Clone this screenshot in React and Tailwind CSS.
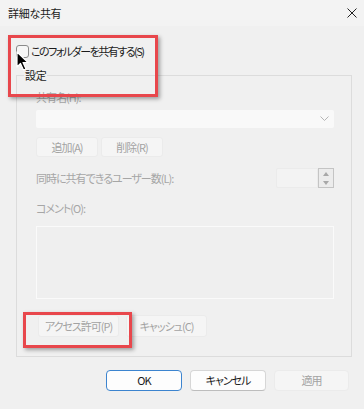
import React from 'react';

const font = { fontFamily: '"Noto Sans CJK JP", "Noto Sans", sans-serif' };

const DisabledButton = ({ children, className = '' }) => (
    <div className={`flex items-center justify-center whitespace-nowrap rounded-[3px] border border-[#ebebeb] bg-[#f5f5f5] text-[11px] text-[#a3a3a3] ${className}`}>
        {children}
    </div>
);

const Cursor = () => (
    <svg width="14" height="20" viewBox="0 0 14 20" className="absolute left-[16px] top-[51px]">
        <path d="M1 1 L1 16 L4.5 12.5 L7.5 19 L10 18 L7 11.5 L12 11.5 Z" fill="#000" stroke="#fff" strokeWidth="1.2" strokeLinejoin="round" />
    </svg>
);

const App = () => {
    return (
        <div className="relative w-[364px] h-[409px] overflow-hidden bg-[#f0f0f0] text-[#1b1b1b] [font-feature-settings:'palt'] tracking-[-1px]" style={font}>
            {/* Title bar */}
            <div className="flex h-[26px] items-center justify-between bg-[#f3f3f3] pl-[8px] pr-[7px]">
                <span className="text-[11px] leading-none tracking-[-0.3px]">詳細な共有</span>
                <svg width="10" height="10" viewBox="0 0 10 10">
                    <path d="M0.5 0.5 L9.5 9.5 M9.5 0.5 L0.5 9.5" stroke="#222" strokeWidth="1" />
                </svg>
            </div>

            {/* Share checkbox */}
            <div className="mt-[19px] ml-[16px] flex h-[13px] items-center gap-[2px]">
                <div className="h-[13px] w-[13px] rounded-[3px] border border-[#8a8a8a] bg-[#f6f6f6]" />
                <span className="text-[11px] leading-none tracking-[-1.5px]">このフォルダーを共有する(S)</span>
            </div>

            {/* Settings group */}
            <div className="relative mt-[17px] ml-[16px] h-[282px] w-[336px] border border-[#dcdcdc] pl-[19px] pr-[17px]">
                <span className="absolute -top-[9px] left-[7px] bg-[#f0f0f0] px-[1px] text-[11px] leading-[16px] tracking-[-0.3px]">設定</span>

                <div className="mt-[13px] text-[11px] leading-[16px] text-[#a6a6a6]">共有名(H):</div>
                <div className="mt-[5px] flex h-[18px] items-center justify-end rounded-[2px] bg-[#f9f9f9] pr-[5px]">
                    <svg width="9" height="6" viewBox="0 0 9 6">
                        <path d="M0.5 0.5 L4.5 4.5 L8.5 0.5" fill="none" stroke="#b5b5b5" strokeWidth="1" />
                    </svg>
                </div>

                <div className="mt-[9px] flex gap-[3px]">
                    <DisabledButton className="h-[20px] w-[62px]">追加(A)</DisabledButton>
                    <DisabledButton className="h-[20px] w-[62px]">削除(R)</DisabledButton>
                </div>

                <div className="mt-[11px] flex h-[20px] items-center justify-between">
                    <span className="text-[11px] text-[#a6a6a6]">同時に共有できるユーザー数(L):</span>
                    <div className="flex h-[20px]">
                        <div className="w-[42px] rounded-l-[2px] border border-[#ebebeb] bg-[#f3f3f3]" />
                        <div className="flex w-[16px] flex-col border border-[#c4c4c4] bg-[#ececec]">
                            <div className="flex flex-1 items-center justify-center">
                                <svg width="6" height="4" viewBox="0 0 6 4"><path d="M0 4 L3 0 L6 4 Z" fill="#a8a8a8" /></svg>
                            </div>
                            <div className="flex flex-1 items-center justify-center">
                                <svg width="6" height="4" viewBox="0 0 6 4"><path d="M0 0 L3 4 L6 0 Z" fill="#a8a8a8" /></svg>
                            </div>
                        </div>
                    </div>
                </div>

                <div className="mt-[12px] text-[11px] leading-[16px] text-[#a6a6a6]">コメント(O):</div>
                <div className="mt-[10px] h-[73px] border border-[#fafafa] bg-[#efefef]" />

                <div className="mt-[16px] flex gap-[7px] pl-[2px]">
                    <DisabledButton className="h-[22px] w-[81px]">アクセス許可(P)</DisabledButton>
                    <DisabledButton className="h-[22px] w-[81px]">キャッシュ(C)</DisabledButton>
                </div>
            </div>

            {/* Dialog buttons */}
            <div className="mt-[13px] flex justify-end gap-[8px] pr-[15px]">
                <div className="flex h-[21px] w-[76px] items-center justify-center rounded-[4px] border-[1.5px] border-[#3c84cf] bg-[#fdfdfd] text-[11px]">OK</div>
                <div className="flex h-[21px] w-[76px] items-center justify-center rounded-[4px] border border-[#d6d6d6] border-b-[#bdbdbd] bg-[#fdfdfd] text-[11px]">キャンセル</div>
                <DisabledButton className="h-[21px] w-[75px] rounded-[4px]">適用</DisabledButton>
            </div>

            {/* Annotation highlights */}
            <div className="absolute left-[8px] top-[35px] h-[62px] w-[150px] border-[3px] border-[#e8474c] shadow-[2px_2px_4px_rgba(0,0,0,0.35)]" />
            <div className="absolute left-[23px] top-[312px] h-[36px] w-[109px] border-[3px] border-[#e8474c] shadow-[2px_2px_4px_rgba(0,0,0,0.35)]" />

            <Cursor />
        </div>
    );
};

export default App;
